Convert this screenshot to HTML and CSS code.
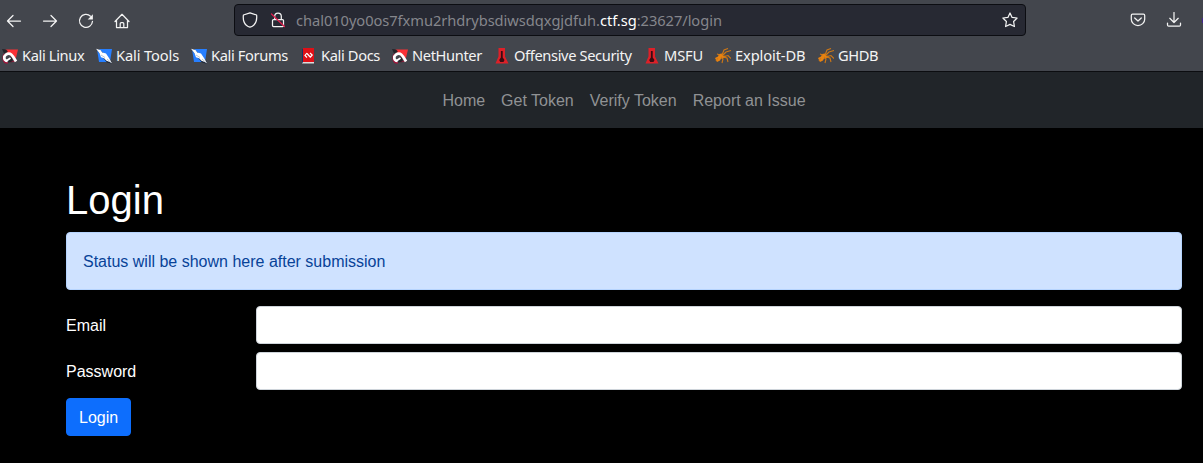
FILE: index.html
```html
<!DOCTYPE html>
<html lang="en">
<head>
<meta charset="utf-8">
<title>Login</title>
<link rel="stylesheet" href="styles.css">
</head>
<body>
<svg class="defs" width="0" height="0">
  <symbol id="dragon" viewBox="0 0 16 16">
    <path d="M3 1.500h13l-3 12.500-3-5-5-4z" fill="#fa3035"/>
    <path d="M0 1l4 .5 2 2-4 2zM7 9l3 1 1 4-5 .5z" fill="#24242a"/>
    <path d="M8 14.500l6.500-1.500-1-4-1 3z" fill="#a31238"/>
    <path d="M2.500 6Q-.5 11 3 14.500L6 15" fill="none" stroke="#a31238" stroke-width="1.500"/>
    <path d="M5.500 13C1.500 12.500 1.500 8.500 4 6.700C9 3.500 11 8.500 14 13.500" fill="none" stroke="#fff" stroke-width="2.700"/>
    <path d="M4.500 12.800L8.500 10" stroke="#fff" stroke-width="1.700"/>
  </symbol>
  <symbol id="tool" viewBox="0 0 16 16">
    <path d="M1 1h15l-2 13H3z" fill="#277fff"/>
    <path d="M0 1h3l13 12.500-1 2-4-1z" fill="#1b2638"/>
    <path d="M0 .8L4.500 2l1.800 2.500L10 5.500l3 4.500 3 5-5.500-2.300-2.500-2.500-3-1-1.500-4z" fill="#fff"/>
    <path d="M5 7l4 2.500M11 11l4 3.500" stroke="#9eabbb" stroke-width=".7"/>
  </symbol>
  <symbol id="thermo" viewBox="0 0 16 16">
    <path d="M4.500 0h6.500v8.500l3.500 7H1.500l3-7z" fill="#de2028"/>
    <path d="M6.900 3h1.800v6.500l1.800 2.500-1 2H6.200l-1-2 1.700-2.500z" fill="#390c12"/>
  </symbol>
  <symbol id="bug" viewBox="0 0 16 16">
    <path d="M0 10l3-1.500 1-2.500 3-.5 1 2 3 .5-2 2-3 .5-1 2-3 1.500z" fill="#e98310"/>
    <path d="M7 7L9 2l4-1.500M8 7l3-3 5-1.500M9 8.500l4-1 3 3M8 9l4 1 1 4M6 9l2 2-1 4M5 7L2 6M3 10l-2 3" fill="none" stroke="#cf7815" stroke-width="1.100"/>
  </symbol>
</svg>

<header class="browser">
  <div class="toolbar">
    <div class="controls">
      <svg class="icon" viewBox="0 0 16 16"><path d="M14.500 8H1.800M7 2.500L1.500 8 7 13.500"/></svg>
      <svg class="icon" viewBox="0 0 16 16"><path d="M1.500 8h12.700M9 2.500L14.500 8 9 13.500"/></svg>
      <svg class="icon" viewBox="0 0 16 16"><path d="M12.500 3.200A6.500 6.500 0 1 0 14.500 8.300"/><path class="solid" d="M14.900 1.300v5.200H9.700z"/></svg>
      <svg class="icon" viewBox="0 0 16 16"><path d="M1 8.500L8 1.300l7 7.200M2.500 7.200v7.300h11V7.200M6.200 14.200v-3.500q0-1 1-1h1.600q1 0 1 1v3.500"/></svg>
    </div>
    <div class="address">
      <svg class="icon shield" viewBox="0 0 16 16"><path d="M8 .8L14.600 3q.8 7-2.900 10.200Q10 14.700 8 15.200q-2-.5-3.700-2Q.6 10 1.400 3z"/></svg>
      <svg class="icon lock" viewBox="0 0 16 16"><path d="M3.500 7.500h9q1 0 1 1v5q0 1-1 1h-9q-1 0-1-1v-5q0-1 1-1zM4.700 7V4.300a3.300 3.300 0 0 1 6.600 0V7"/><path class="slash" d="M1.500 2l13 12.500"/></svg>
      <div class="url">chal010yo0os7fxmu2rhdrybsdiwsdqxgjdfuh.<span class="domain">ctf.sg</span>:23627/login</div>
      <svg class="icon star" viewBox="0 0 16 16"><path d="M8 1l2.100 4.400 5 .6-3.500 3.500.8 5L8 12.400l-4.400 2.100.8-5L.9 6l5-.6z"/></svg>
    </div>
    <div class="actions">
      <svg class="icon" viewBox="0 0 16 16"><path d="M2.500 2.200h11q1.200 0 1.200 1.200v3.800a6.700 6.300 0 0 1-13.400 0V3.400q0-1.200 1.200-1.200zM4.700 6L8 9l3.300-3"/></svg>
      <svg class="icon" viewBox="0 0 16 16"><path d="M8 .5v10M3.800 6.300L8 10.500l4.200-4.200M1.500 11v2q0 1.200 1.200 1.200h10.600q1.200 0 1.200-1.200v-2"/></svg>
      <span class="extension"></span>
    </div>
  </div>
  <nav class="bookmarks">
    <a><svg><use href="#dragon"/></svg><span class="tight">Kali Linux</span></a>
    <a><svg><use href="#tool"/></svg><span>Kali Tools</span></a>
    <a><svg><use href="#tool"/></svg><span class="tight">Kali Forums</span></a>
    <a><svg viewBox="0 0 16 16"><path d="M1 1h2v14H1z" fill="#173565"/><path d="M2 0h11v14H2z" fill="#df1017"/><path d="M2 14h11v1.500H1z" fill="#ddd"/><path d="M6 5L4 7.500 6 9.500M9 5l2.200 2L9 9.500M6 5.500l3.200 3.500" fill="none" stroke="#fff" stroke-width="1.200"/></svg><span class="tight">Kali Docs</span></a>
    <a><svg><use href="#dragon"/></svg><span class="tight">NetHunter</span></a>
    <a><svg><use href="#thermo"/></svg><span class="tight">Offensive Security</span></a>
    <a><svg><use href="#thermo"/></svg><span>MSFU</span></a>
    <a><svg><use href="#bug"/></svg><span>Exploit-DB</span></a>
    <a><svg><use href="#bug"/></svg><span class="tight">GHDB</span></a>
  </nav>
</header>
<nav class="site-nav"><a>Home</a><a>Get Token</a><a>Verify Token</a><a>Report an Issue</a></nav>
<main class="content">
  <h1>Login</h1>
  <div class="status">Status will be shown here after submission</div>
  <form>
    <div class="field"><label for="email">Email</label><input id="email" type="email"></div>
    <div class="field"><label for="password">Password</label><input id="password" type="password"></div>
    <button type="button">Login</button>
  </form>
</main>
</body>
</html>
```
FILE: styles.css
```css
* { box-sizing: border-box; }
body {
  margin: 0;
  height: 463px;
  overflow: hidden;
  background: #000;
  color: #fff;
  font: 16px/24px "Liberation Sans", Arial, sans-serif;
}
.defs { position: absolute; }
.browser {
  height: 72px;
  background: #43464d;
  border-bottom: 1px solid #0c0d10;
  font-family: "Noto Sans", sans-serif;
  font-size: 14.67px;
}
.toolbar { display: flex; height: 40px; padding-top: 4px; }
.controls { display: flex; align-items: center; gap: 20px; width: 234px; height: 33px; padding-left: 6px; }
.icon {
  flex: none;
  width: 16px;
  height: 16px;
  fill: none;
  stroke: #f3f3f3;
  stroke-width: 1.25;
  stroke-linecap: round;
  stroke-linejoin: round;
}
.solid { fill: #f3f3f3; stroke: none; }
.slash { stroke: #e21d4d; }
.address {
  display: flex;
  align-items: center;
  width: 792px;
  height: 32px;
  padding: 0 7px;
  background: #272933;
  border: 1px solid #0c0d12;
  border-radius: 4px;
}
.lock { margin-left: 12px; }
.url { flex: 1; margin-left: 10px; color: #85868c; letter-spacing: -.05px; white-space: nowrap; }
.domain { color: #fff; }
.actions { display: flex; align-items: center; gap: 20px; height: 32px; margin-left: 104px; }
.extension { width: 1px; height: 5px; background: #45268d; }
.bookmarks {
  display: grid;
  grid-template-columns: 94px 95px 110px 91px 102px 150px 71px 103px 64px;
  align-items: center;
  height: 31px;
  padding-left: 2px;
  color: #f4f4f4;
}
.bookmarks a { display: flex; align-items: center; gap: 4px; height: 24px; white-space: nowrap; }
.bookmarks svg { flex: none; width: 16px; height: 16px; }
.bookmarks span { margin-top: -2px; letter-spacing: -.12px; }
.bookmarks .tight { letter-spacing: -.37px; }
.site-nav {
  display: flex;
  justify-content: center;
  gap: 16px;
  height: 56px;
  padding: 17px 0 0 45px;
  background: #212529;
  color: #909294;
}
.content { padding: 48px 21px 0 66px; }
h1 { margin: 0 0 8px; font-size: 40px; line-height: 48px; font-weight: 400; }
.status {
  height: 58px;
  padding: 17px 16px 15px;
  margin-bottom: 16px;
  background: #cfe2ff;
  border: 1px solid #b6d4fe;
  border-radius: 4px;
  color: #084298;
}
.field { display: flex; height: 38px; margin-bottom: 8px; }
label { width: 190px; padding-top: 8px; }
input { flex: 1; border: 1px solid #ced4da; border-radius: 4px; background: #fff; }
button {
  display: block;
  height: 38px;
  padding: 7px 12px 5px;
  border: 1px solid #0d6efd;
  border-radius: 4px;
  background: #0d6efd;
  color: #fff;
  font: inherit;
}
```
